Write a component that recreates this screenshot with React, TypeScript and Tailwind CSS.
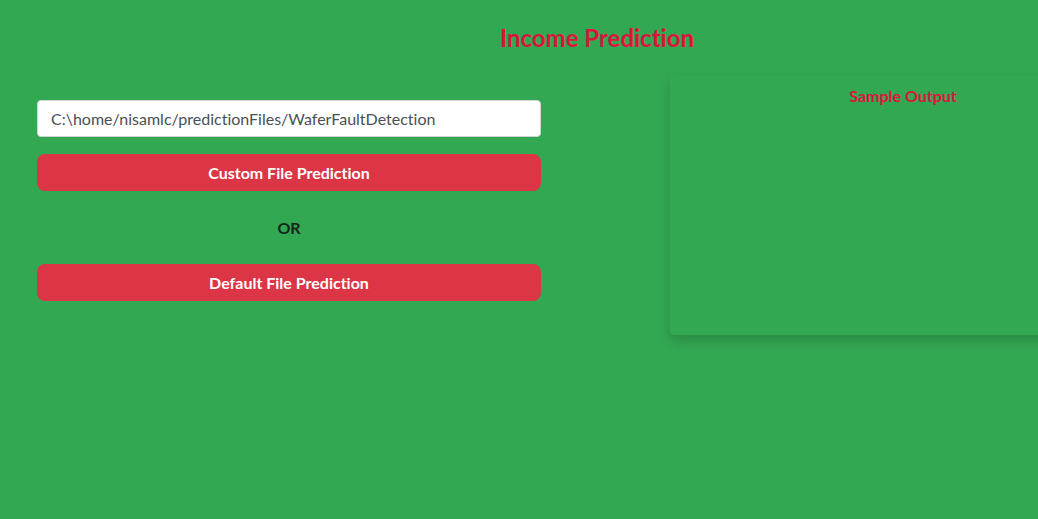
export default function App() {
  return (
    <div
      className="h-[519px] w-full overflow-hidden bg-[#33a853] [font-variant-ligatures:none]"
      style={{ fontFamily: "Lato, 'Open Sans', sans-serif" }}
    >
      <h1 className="pl-[156px] pt-[23px] text-center text-[24px] font-bold leading-[30px] text-[#dc143c]">
        Income Prediction
      </h1>

      <div className="mt-[22px] flex items-start">
        <div className="ml-[37px] mt-[25px] flex w-[504px] shrink-0 flex-col">
          <input
            className="h-[37px] w-full rounded-[4px] border border-[#ced4da] bg-white px-[13px] text-[16px] text-[#495057] outline-none"
            defaultValue="C:\home/nisamlc/predictionFiles/WaferFaultDetection"
            type="text"
          />
          <button
            className="mt-[17px] h-[37px] w-full rounded-[8px] bg-[#dc3545] text-[16px] font-bold text-white"
            type="button"
          >
            Custom File Prediction
          </button>
          <p className="mt-[27px] text-center text-[16px] font-bold leading-[20px] text-[#13261a]">
            OR
          </p>
          <button
            className="mt-[26px] h-[37px] w-full rounded-[8px] bg-[#dc3545] text-[16px] font-bold text-white"
            type="button"
          >
            Default File Prediction
          </button>
        </div>

        <div className="ml-[129px] h-[260px] w-[466px] shrink-0 rounded-[4px] bg-[#33a853] shadow-[0_6px_12px_rgba(0,0,0,0.18)]">
          <p className="pt-[12px] text-center text-[16px] font-bold leading-[18px] text-[#dc143c]">
            Sample Output
          </p>
        </div>
      </div>
    </div>
  );
}
